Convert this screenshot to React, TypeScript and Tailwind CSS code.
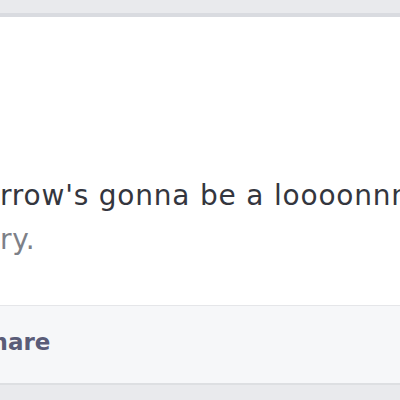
export default function App() {
  return (
    <div className="w-[400px] h-[400px] overflow-hidden bg-[#e9eaed] flex flex-col font-['DejaVu_Sans',sans-serif]">
      <div className="h-[13px] shrink-0" />
      <div className="h-[4px] shrink-0 bg-[#d9dbe0]" />
      <div className="bg-white flex flex-col">
        <div className="h-[288px] pt-[157px] overflow-hidden">
          <p className="whitespace-nowrap text-[28px] leading-[44px] tracking-[0.8px] text-[#34363e]">
            rrow's gonna be a loooonnng day
          </p>
          <p className="whitespace-nowrap text-[28px] leading-[44px] tracking-[0.8px] text-[#7d8088]">ry.</p>
        </div>
        <div className="h-[1px] bg-[#e5e6e9]" />
        <div className="h-[77px] bg-[#f6f7f9] pt-[21px] overflow-hidden">
          <span className="block whitespace-nowrap text-[23px] leading-[30px] font-bold text-[#5a5c78] -ml-[25px]">Share</span>
        </div>
        <div className="h-[2px] bg-[#dddfe2]" />
      </div>
    </div>
  );
}
